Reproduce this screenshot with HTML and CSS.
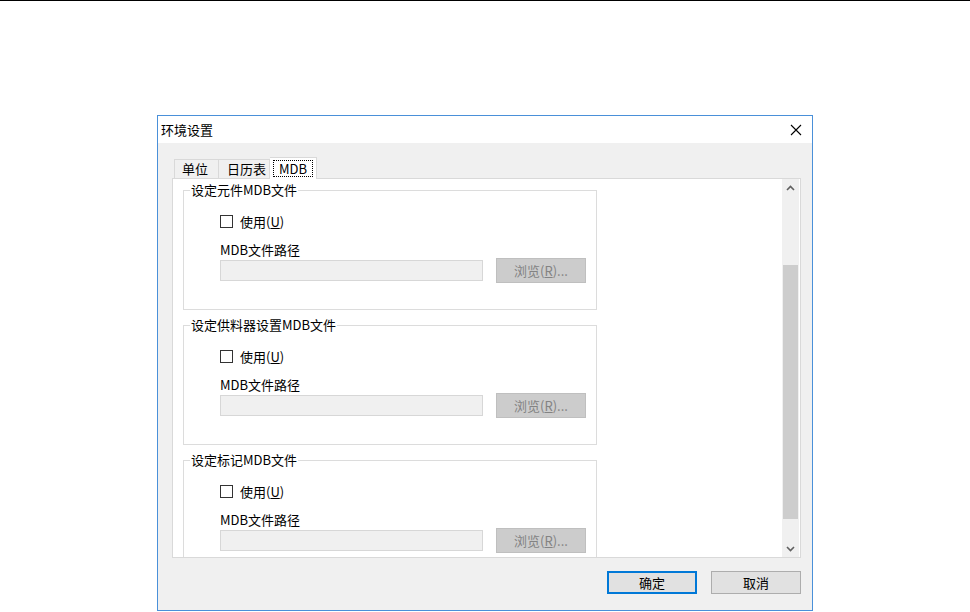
FILE: index.html
```html
<!DOCTYPE html>
<html lang="zh">
<head>
<meta charset="utf-8">
<title>环境设置</title>
<link rel="stylesheet" href="styles.css">
</head>
<body>
<div class="topline"></div>
<div class="dialog">
  <div class="titlebar">
    <span class="title">环境设置</span>
    <svg class="close" width="12" height="12" viewBox="0 0 12 12"><path d="M1 1L11 11M11 1L1 11" stroke="#000" stroke-width="1.1" fill="none"/></svg>
  </div>
  <div class="body">
    <div class="tabs">
      <div class="tab t1">单位</div>
      <div class="tab t2">日历表</div>
      <div class="tab t3 active"><span class="focus">MDB</span></div>
    </div>
    <div class="panel">
      <div class="content">
        <div class="group">
          <div class="group-title">设定元件MDB文件</div>
          <div class="check-row"><span class="box"></span><span>使用(<u>U</u>)</span></div>
          <div class="path-label">MDB文件路径</div>
          <div class="path-row"><div class="textbox"></div><div class="browse">浏览(<u>R</u>)...</div></div>
        </div>
        <div class="group">
          <div class="group-title">设定供料器设置MDB文件</div>
          <div class="check-row"><span class="box"></span><span>使用(<u>U</u>)</span></div>
          <div class="path-label">MDB文件路径</div>
          <div class="path-row"><div class="textbox"></div><div class="browse">浏览(<u>R</u>)...</div></div>
        </div>
        <div class="group">
          <div class="group-title">设定标记MDB文件</div>
          <div class="check-row"><span class="box"></span><span>使用(<u>U</u>)</span></div>
          <div class="path-label">MDB文件路径</div>
          <div class="path-row"><div class="textbox"></div><div class="browse">浏览(<u>R</u>)...</div></div>
        </div>
      </div>
      <div class="scrollbar">
        <div class="arrow"><svg width="9" height="6" viewBox="0 0 9 6"><path d="M1 5L4.5 1.5L8 5" stroke="#606060" stroke-width="1.6" fill="none"/></svg></div>
        <div class="track"><div class="thumb"></div></div>
        <div class="arrow"><svg width="9" height="6" viewBox="0 0 9 6"><path d="M1 1L4.5 4.5L8 1" stroke="#606060" stroke-width="1.6" fill="none"/></svg></div>
      </div>
    </div>
    <div class="buttons">
      <div class="btn default">确定</div>
      <div class="btn">取消</div>
    </div>
  </div>
</div>
</body>
</html>
```

FILE: styles.css
```css
html, body {
  margin: 0;
  padding: 0;
  background: #fff;
}
body {
  font-family: "Noto Sans CJK SC", "Liberation Sans", sans-serif;
  font-size: 13px;
  color: #000;
  width: 970px;
  height: 612px;
  overflow: hidden;
}
.topline {
  height: 1px;
  background: #000;
}
.dialog {
  margin: 114px 0 0 157px;
  width: 654px;
  height: 494px;
  border: 1px solid #4a90d9;
  background: #f0f0f0;
  display: flex;
  flex-direction: column;
}
.titlebar {
  height: 27px;
  background: #fff;
  display: flex;
  align-items: center;
  justify-content: space-between;
  padding: 0 10px 0 3px;
  flex: none;
}
.title {
  line-height: 16px;
}
.close {
  display: block;
}
.body {
  flex: 1;
  padding: 14px 11px 0 14px;
  display: flex;
  flex-direction: column;
}
.tabs {
  height: 21px;
  display: flex;
  align-items: flex-end;
  padding-left: 2px;
  position: relative;
  z-index: 1;
}
.tab {
  border: 1px solid #d9d9d9;
  border-bottom: none;
  background: #f0f0f0;
  line-height: 18px;
  box-sizing: border-box;
  height: 19px;
}
.t1 { width: 44px; padding-left: 7px; border-right: none; }
.t2 { width: 52px; padding-left: 8px; }
.t3 {
  width: 47px;
  height: 22px;
  margin-bottom: -1px;
  background: #fff;
  border-left: none;
  padding: 2px 0 0 3px;
  line-height: 16px;
}
.focus {
  display: inline-block;
  border: 1px dotted #000;
  padding: 0 5px 0 5px;
  line-height: 15px;
  height: 15px;
}
.panel {
  height: 380px;
  box-sizing: border-box;
  border: 1px solid #d9d9d9;
  background: #fff;
  display: flex;
}
.content {
  flex: 1;
  overflow: hidden;
  padding: 11px 0 0 10px;
  display: flex;
  flex-direction: column;
  gap: 15px;
}
.group {
  position: relative;
  width: 414px;
  height: 120px;
  box-sizing: border-box;
  flex: none;
  border: 1px solid #dcdcdc;
  padding-left: 36px;
}
.group-title {
  position: absolute;
  top: -9px;
  left: 6px;
  background: #fff;
  padding: 0 1px;
  line-height: 16px;
}
.check-row {
  margin-top: 23px;
  height: 15px;
  display: flex;
  align-items: center;
  gap: 7px;
  line-height: 15px;
}
.box {
  width: 11px;
  height: 11px;
  border: 1px solid #333;
  background: #fff;
}
.path-label {
  margin-top: 13px;
  line-height: 16px;
  height: 16px;
}
.path-row {
  height: 25px;
  display: flex;
  align-items: center;
  gap: 13px;
}
.textbox {
  width: 261px;
  height: 19px;
  border: 1px solid #d7d7d7;
  background: #f0f0f0;
}
.browse {
  width: 88px;
  height: 23px;
  border: 1px solid #bfbfbf;
  background: #cccccc;
  color: #838383;
  text-align: center;
  line-height: 23px;
}
.scrollbar {
  width: 17px;
  margin-right: 1px;
  background: #f0f0f0;
  display: flex;
  flex-direction: column;
}
.arrow {
  height: 17px;
  display: flex;
  align-items: center;
  justify-content: center;
}
.track {
  flex: 1;
  padding-top: 69px;
  padding-bottom: 21px;
  display: flex;
  flex-direction: column;
}
.thumb {
  flex: 1;
  margin: 0 1px;
  background: #cdcdcd;
}
.buttons {
  margin-top: 13px;
  display: flex;
  justify-content: flex-end;
  gap: 14px;
}
.btn {
  width: 88px;
  height: 21px;
  border: 1px solid #adadad;
  background: #e1e1e1;
  text-align: center;
  line-height: 21px;
}
.btn.default {
  width: 86px;
  height: 19px;
  border: 2px solid #0078d7;
  line-height: 19px;
}
```
